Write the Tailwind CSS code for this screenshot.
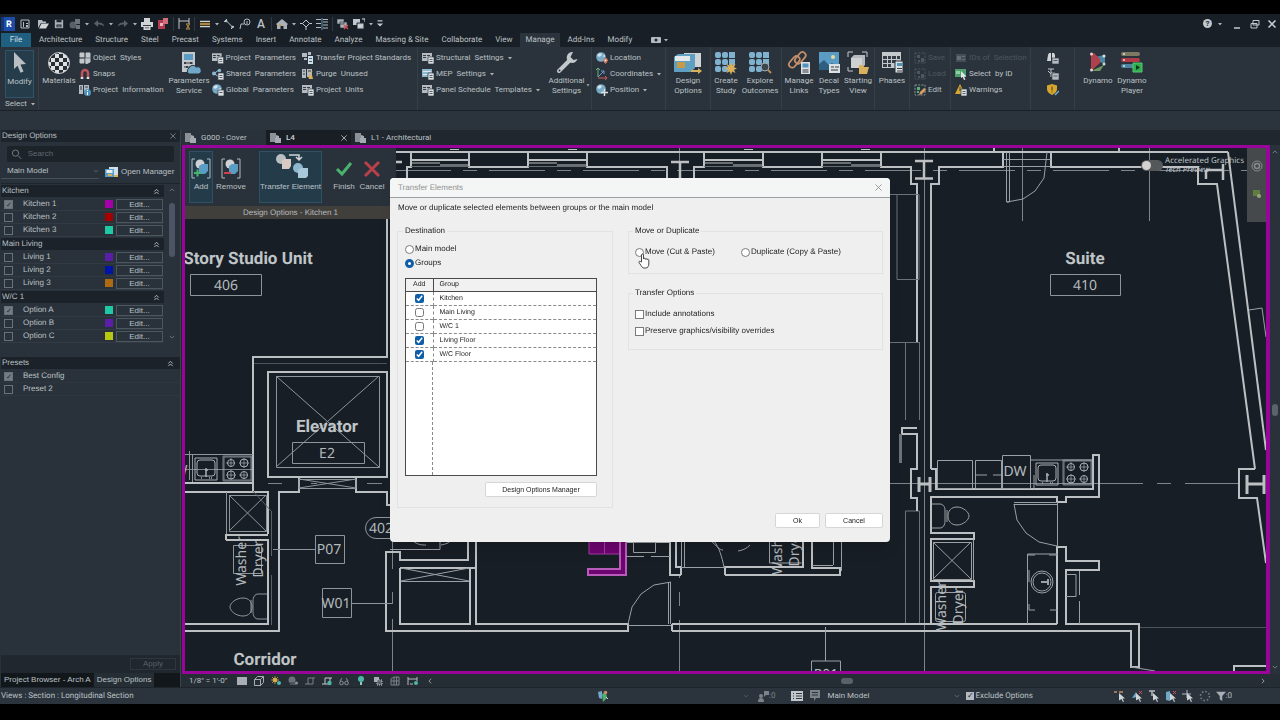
<!DOCTYPE html>
<html lang="en">

<head>
  <meta charset="UTF-8">
  <meta name="viewport" content="width=device-width, initial-scale=1.0">
  <title>Design Options - Transfer Elements</title>
  <script src="https://cdn.jsdelivr.net/npm/@tailwindcss/browser@4"></script>
</head>

<body class="h-screen flex flex-col bg-black pt-3.5 pb-4 overflow-hidden font-['Roboto',sans-serif] text-[8px] leading-[10px] text-[#bcc1c5] [text-rendering:geometricPrecision]">

  <!-- Icon sprite -->
  <svg class="hidden">
    <symbol id="i-caret" viewBox="0 0 8 8"><path d="M2 3h4L4 5.500z" fill="#aeb4b9"/></symbol>
    <symbol id="i-chev" viewBox="0 0 8 8"><path d="M1 2.500l3 3 3-3" fill="none" stroke="currentColor"/></symbol>
    <symbol id="i-x" viewBox="0 0 8 8"><path d="M.5.5l7 7M7.500.5l-7 7" fill="none" stroke="currentColor"/></symbol>
    <symbol id="i-dbl" viewBox="0 0 8 8"><path d="M1.500 4L4 1.500 6.500 4M1.500 7L4 4.500 6.500 7" fill="none" stroke="#c3c8cc"/></symbol>
    <symbol id="i-home" viewBox="0 0 12 12"><path d="M2 2h8v8H2z" fill="none" stroke="#b4babf"/><path d="M4 4h1v5H4zM7 5h2v1H7zM7 7h2v2H7z" fill="#b4babf"/></symbol>
    <symbol id="i-folder" viewBox="0 0 12 12"><path d="M1 10V2h4l1 1.500h3V5H4z" fill="#b4babf"/><path d="M4.500 5.500H12L9 10.500H2z" fill="#d0d4d7"/></symbol>
    <symbol id="i-save" viewBox="0 0 12 12"><path d="M1 1h10v10H1z" fill="#aab0b5"/><path d="M3 1h6v3H3zM3 6.500h6V10H3z" fill="#20282f"/><path d="M4 8h4v1H4z" fill="#aab0b5"/></symbol>
    <symbol id="i-sync" viewBox="0 0 12 12"><circle cx="4" cy="7" r="3.500" fill="#596066"/><path d="M6 1h5v5H6zM7 7h4v4H7z" fill="#6c7379"/></symbol>
    <symbol id="i-undo" viewBox="0 0 12 12"><path d="M1 5.500L5 2v2.500c3.500 0 6 1 6 4-1.500-1.500-3-2-6-2V9z" fill="#596066"/></symbol>
    <symbol id="i-redo" viewBox="0 0 12 12"><path d="M11 5.500L7 2v2.500c-3.500 0-6 1-6 4 1.500-1.500 3-2 6-2V9z" fill="#596066"/></symbol>
    <symbol id="i-print" viewBox="0 0 12 12"><path d="M3 0h6v4H3zM0 4h12v5H0zM2.500 7h7v5h-7z" fill="#d0d4d7"/><path d="M2 7h8v1H2zM4 9.500h4v.8H4z" fill="#353d44"/></symbol>
    <symbol id="i-pdf" viewBox="0 0 12 12"><path d="M1 2h7v9H1z" fill="#b33c50"/><path d="M6 0h5v6H6z" fill="#cf6f7c"/><path d="M3 5h3v3H3z" fill="#e5b6bc"/></symbol>
    <symbol id="i-dim" viewBox="0 0 12 12"><path d="M1 0v11M11 0v6M1 3h10" stroke="#c3c8cc" fill="none"/><path d="M8 6h4M8 11h4M8.500 6.500l3 4M11.500 6.500l-3 4" stroke="#c09a48" fill="none"/></symbol>
    <symbol id="i-ruler" viewBox="0 0 12 12"><path d="M0 2h12v1.500H0zM0 8.500h12V10H0z" fill="#d0d4d7"/><path d="M0 4.500h12v3H0z" fill="#b0873a"/></symbol>
    <symbol id="i-align" viewBox="0 0 12 12"><path d="M1 4l3-3M3 2.500l6 6M8 11l3-3" stroke="#b4c6d2" fill="none"/><circle cx="3" cy="3" r="1.300" fill="#b4c6d2"/><circle cx="9.500" cy="9" r="1.300" fill="#b4c6d2"/></symbol>
    <symbol id="i-tag" viewBox="0 0 12 12"><circle cx="8" cy="4" r="3" stroke="#b4babf" fill="none"/><path d="M1 11l1-5h3M8 3v3" stroke="#b4babf" fill="none"/></symbol>
    <symbol id="i-3d" viewBox="0 0 12 12"><path d="M0 6l6-5 6 5-1 1v4H7.500V8h-3v3H1V7z" fill="#aab0b5"/><path d="M3 6h2v2H3z" fill="#c8a050"/></symbol>
    <symbol id="i-section" viewBox="0 0 12 12"><path d="M6 2l3.500 3.500L6 9 2.500 5.500z" fill="none" stroke="#c3c8cc"/><path d="M0 5.500h2.500M9.500 5.500H12M6 9v3" stroke="#c3c8cc"/></symbol>
    <symbol id="i-thin" viewBox="0 0 12 12"><path d="M0 1.500h5M0 5.500h5M0 9.500h5M7 1.500h5M7 4h5M7 7h5M7 10h5" stroke="#b4babf"/><path d="M6 0v12" stroke="#5f93b0"/></symbol>
    <symbol id="i-close-w" viewBox="0 0 12 12"><path d="M0 1h7v5H0zM3 4h7v6H3z" fill="#aab0b5" stroke="#20282f" stroke-width=".6"/><path d="M7 7l4 4M11 7l-4 4" stroke="#d04c58" stroke-width="1.300"/></symbol>
    <symbol id="i-switch" viewBox="0 0 12 12"><path d="M0 1h7v6H0z" fill="#c3c8cc"/><path d="M4 5h7v6H4z" fill="#c3c8cc" stroke="#20282f"/><path d="M9 1h3v3M5 8h4" stroke="#e0e3e5" fill="none"/></symbol>
    <symbol id="i-cam" viewBox="0 0 10 6"><rect width="10" height="6" rx="1" fill="#b4babf"/><circle cx="5" cy="3" r="1.500" fill="#20282f"/></symbol>
    <symbol id="i-form" viewBox="0 0 12 12"><path d="M0 1h10v8H0z" fill="#b4babf"/><path d="M1 3h3v1H1zM1 5h3v1H1zM5 3h3v1H5z" fill="#353d44"/><path d="M6 5h6v7H6z" fill="#dde0e2" stroke="#353d44" stroke-width=".7"/><path d="M7.500 7h3v1h-3zM7.500 9h3v1h-3z" fill="#4b6170"/></symbol>
    <symbol id="i-formb" viewBox="0 0 12 12"><path d="M0 1h10v8H0z" fill="#8db7cf"/><path d="M1 3h8v1H1zM1 6h4v1H1z" fill="#e3e6e8"/><path d="M6 5h6v7H6z" fill="#dde0e2" stroke="#353d44" stroke-width=".7"/><path d="M7.500 7h3v1h-3zM7.500 9h3v1h-3z" fill="#4b6170"/></symbol>
    <symbol id="i-styles" viewBox="0 0 12 12"><path d="M1 1h4v4H1zM7 1h4v4H7zM1 7h4v4H1zM6 6l5-1v5l-4 2z" fill="#c3c8cc" stroke="#c3c8cc"/><path d="M6 0v12M0 6h12" stroke="#56606a" stroke-width=".7"/></symbol>
    <symbol id="i-magnet" viewBox="0 0 12 12"><path d="M3 9V5a3 3 0 016 0v4" fill="none" stroke="#c05562" stroke-width="2.500"/><path d="M1.700 9h2.600v2H1.700zM7.700 9h2.600v2H7.700z" fill="#dde0e2"/></symbol>
    <symbol id="i-info" viewBox="0 0 12 12"><path d="M0 1h4v9H0zM5 1h5v8H5z" fill="#b4babf"/><path d="M1 3h2M6 3h3M1 5h2" stroke="#353d44"/><circle cx="8.500" cy="8.500" r="3.500" fill="#4f93bf"/><path d="M8.500 6v1M8.500 8v3" stroke="#fff"/></symbol>
    <symbol id="i-share" viewBox="0 0 12 12"><path d="M2 5.500L7 2M2 5.500L7 9" stroke="#9cc3da"/><circle cx="2" cy="5.500" r="2" fill="#8db7cf"/><circle cx="7.500" cy="2.500" r="1.800" fill="#8db7cf"/><path d="M6 5h6v7H6z" fill="#dde0e2" stroke="#353d44" stroke-width=".7"/><path d="M7.500 7h3v1h-3zM7.500 9h3v1h-3z" fill="#4b6170"/></symbol>
    <symbol id="i-globe" viewBox="0 0 12 12"><circle cx="5" cy="5" r="4.800" fill="#76aac6"/><path d="M1 3l3-2 2 1-1 2-2 1zM6 5l3-1v2L7 9z" fill="#d4e2ea"/><path d="M6 6h6v6H6z" fill="#dde0e2" stroke="#353d44" stroke-width=".7"/><path d="M7.500 8h3v1h-3z" fill="#4b6170"/></symbol>
    <symbol id="i-pin" viewBox="0 0 12 12"><circle cx="5" cy="5" r="4.800" fill="#76aac6"/><path d="M1 3l3-2 2 1-1 2-2 1zM6 4l3-1v2z" fill="#d4e2ea"/><path d="M9.500 6a2.300 2.300 0 012.300 2.300C11.800 10 9.500 12 9.500 12S7.200 10 7.200 8.300A2.300 2.300 0 019.500 6z" fill="#cf7a5c"/><circle cx="9.500" cy="8.300" r=".9" fill="#fff"/></symbol>
    <symbol id="i-coord" viewBox="0 0 12 12"><path d="M2 0v9M0 2l2-2 2 2" stroke="#65b484" fill="none"/><path d="M2 9l6-6M5 3h3v3" stroke="#6c9bd0" fill="none"/><path d="M2 10h9M9 8l2 2-2 2" stroke="#cf5b5b" fill="none"/></symbol>
    <symbol id="i-pos" viewBox="0 0 12 12"><circle cx="5" cy="5" r="4.800" fill="#76aac6"/><path d="M1 3l3-2 2 1-1 2-2 1z" fill="#d4e2ea"/><path d="M8.500 5v7M5 8.500h7" stroke="#dde0e2" stroke-width="1.500"/></symbol>
    <symbol id="i-transfer" viewBox="0 0 12 12"><path d="M0 1h5v4H0zM6 0h3v3H6zM2 6h3v2H2z" fill="#b4babf"/><path d="M6 4h5v8H6z" fill="#cfe0ea"/><path d="M7 6h3v1H7zM7 9h3v1H7z" fill="#4b6170"/></symbol>
    <symbol id="i-purge" viewBox="0 0 12 12"><path d="M0 1h4v9H0zM5 1h5v8H5z" fill="#b4babf"/><path d="M1 3h2M6 3h3M1 6h2" stroke="#353d44"/><path d="M10 3L8 7" stroke="#d9b15d"/><path d="M6 8l4-1 1 4H7z" fill="#d9b15d"/></symbol>
    <symbol id="i-sel" viewBox="0 0 12 12"><path d="M1 1h10v10H1z" fill="none" stroke="currentColor" stroke-dasharray="2 1.200"/><path d="M3 3h3v3H3zM7 6h3v4H7zM4 8h2v2H4z" fill="currentColor"/></symbol>
    <symbol id="i-seledit" viewBox="0 0 12 12"><path d="M1 1h10v10H1z" fill="none" stroke="#8b949b" stroke-dasharray="2 1.200"/><path d="M3 3h3v3H3zM3 7h2v2H3z" fill="#54b377"/><path d="M5 11l1-3 4-4 2 2-4 4z" fill="#d89a63"/></symbol>
    <symbol id="i-ids" viewBox="0 0 12 12"><path d="M1 2h10v8H1z" fill="#454e56"/><path d="M2 4h4v4H2zM7 4h3v1H7zM7 7h3v1H7z" fill="#646d75"/></symbol>
    <symbol id="i-byid" viewBox="0 0 12 12"><path d="M0 1h11v8H0z" fill="#4da06c"/><path d="M1 3h4v3H1z" fill="#8fd0a6"/><path d="M6 3l5.500 5.500H9l1.500 3-1.500.5-1.300-3L6 10z" fill="#e3e6e8"/></symbol>
    <symbol id="i-warn" viewBox="0 0 12 12"><path d="M5 0l5 10H0z" fill="#d9a62c"/><path d="M5 3v4" stroke="#353d44"/><path d="M6 5h6v7H6z" fill="#dde0e2" stroke="#353d44" stroke-width=".7"/><path d="M7.500 7h3v1h-3zM7.500 9h3v1h-3z" fill="#4b6170"/></symbol>
    <symbol id="i-bino" viewBox="0 0 12 12"><path d="M1 3l1-2h2v8H0zM5 1h2l1 2v3H5z" fill="#d0d4d7"/><path d="M5 6h7v6H5z" fill="#b4babf" stroke="#2b333b" stroke-width=".6"/><path d="M6.500 8h4v1h-4z" fill="#4b6170"/></symbol>
    <symbol id="i-tree" viewBox="0 0 12 12"><path d="M1 1h6M4 1v8M4 5h4M1 3l3 3" stroke="#c3c8cc" fill="none"/><path d="M5 5h7v7H5z" fill="#b4babf" stroke="#2b333b" stroke-width=".6"/><path d="M6.500 7.500h4v1h-4z" fill="#4b6170"/></symbol>
    <symbol id="i-shield" viewBox="0 0 12 12"><path d="M5 0l5 1.500V5c0 3-2 4.500-5 6-3-1.500-5-3-5-6V1.500z" fill="#d9a62c"/><path d="M5 2.500v4M5 7.500v1" stroke="#353d44"/><path d="M8 11l4-4" stroke="#6fb0d4" stroke-width="1.500"/></symbol>
    <symbol id="i-manager" viewBox="0 0 14 12"><path d="M4 1h9v8H4z" fill="#cfe0ea"/><path d="M0 3h9v8H0z" fill="#5b9cc4"/><path d="M1.500 4h6v3h-6z" fill="#e9eef2"/><path d="M3 8h4v2H3zM9 9h4v2H9z" fill="#d9b15d"/></symbol>
    <symbol id="i-doc" viewBox="0 0 12 12"><path d="M0 1h6v9H0z" fill="#8b9197"/><path d="M6 3l3 1v2h2v5H5V6h1z" fill="#a5abb0"/></symbol>
    <symbol id="i-bulb" viewBox="0 0 10 12"><circle cx="5" cy="4" r="3" fill="#4fb5a9"/><path d="M4 7h2v3H4z" fill="#8fc9c2"/></symbol>
    <symbol id="i-cursor" viewBox="0 0 12 12"><path d="M5 3l6 5.500H8.500L10 11.500l-1 .5-1.500-3L5 10.500z" fill="#d0d4d7"/></symbol>
    <symbol id="i-funnel" viewBox="0 0 12 12"><path d="M0 1h12L7.500 6v6L4.500 10V6z" fill="#a8aeb3"/></symbol>
  </svg>

  <!-- Title bar and quick access -->
  <header class="bg-[#181f26]">
    <div class="flex items-center h-[19px] pl-px">
      <svg class="w-3.5 h-3.5 mr-0.5" viewBox="0 0 14 14"><path d="M0 0h14v14H0z" fill="#1d4ca6"/><path d="M0 0h3v14H0z" fill="#12357c"/><text x="5" y="10" font-size="9" font-weight="700" fill="#fff">R</text></svg>
      <button class="w-4 flex justify-center" aria-label="Home"><svg class="w-3 h-3"><use href="#i-home"/></svg></button>
      <button class="w-4 flex justify-center ml-0.5" aria-label="Open"><svg class="w-3 h-3"><use href="#i-folder"/></svg></button>
      <button class="w-4 flex justify-center" aria-label="Save"><svg class="w-2.5 h-2.5"><use href="#i-save"/></svg></button>
      <button class="w-4 flex justify-center" aria-label="Synchronize"><svg class="w-3 h-3"><use href="#i-sync"/></svg></button>
      <svg class="w-2 h-2"><use href="#i-caret"/></svg>
      <button class="w-4 flex justify-center" aria-label="Undo"><svg class="w-3 h-3"><use href="#i-undo"/></svg></button>
      <svg class="w-2 h-2"><use href="#i-caret"/></svg>
      <button class="w-4 flex justify-center" aria-label="Redo"><svg class="w-3 h-3"><use href="#i-redo"/></svg></button>
      <svg class="w-2 h-2"><use href="#i-caret"/></svg>
      <button class="w-4 flex justify-center" aria-label="Print"><svg class="w-3 h-3"><use href="#i-print"/></svg></button>
      <button class="w-4 flex justify-center" aria-label="Export PDF"><svg class="w-3 h-3"><use href="#i-pdf"/></svg></button>
      <span class="w-px h-3.5 mx-0.5 bg-[#303941]"></span>
      <button class="w-4 flex justify-center" aria-label="Measure"><svg class="w-3 h-3"><use href="#i-dim"/></svg></button>
      <span class="w-px h-3.5 mx-0.5 bg-[#303941]"></span>
      <button class="w-4 flex justify-center" aria-label="Dimension"><svg class="w-2.5 h-2.5"><use href="#i-ruler"/></svg></button>
      <svg class="w-2 h-2"><use href="#i-caret"/></svg>
      <button class="w-4 flex justify-center" aria-label="Align"><svg class="w-3 h-3"><use href="#i-align"/></svg></button>
      <button class="w-4 flex justify-center" aria-label="Tag"><svg class="w-3 h-3"><use href="#i-tag"/></svg></button>
      <button class="w-4 text-center text-[12px] leading-3 font-medium">A</button>
      <span class="w-px h-3.5 mx-0.5 bg-[#303941]"></span>
      <button class="w-4 flex justify-center" aria-label="3D view"><svg class="w-3 h-3"><use href="#i-3d"/></svg></button>
      <svg class="w-2 h-2"><use href="#i-caret"/></svg>
      <button class="w-4 flex justify-center" aria-label="Section"><svg class="w-3 h-3"><use href="#i-section"/></svg></button>
      <button class="w-4 flex justify-center" aria-label="Thin lines"><svg class="w-3 h-3"><use href="#i-thin"/></svg></button>
      <span class="w-px h-3.5 mx-0.5 bg-[#303941]"></span>
      <button class="w-4 flex justify-center" aria-label="Close inactive views"><svg class="w-3 h-3"><use href="#i-close-w"/></svg></button>
      <button class="w-4 flex justify-center" aria-label="Switch windows"><svg class="w-3 h-3"><use href="#i-switch"/></svg></button>
      <svg class="w-2 h-2"><use href="#i-caret"/></svg>
      <svg class="w-2.5 h-2.5" viewBox="0 0 8 8"><path d="M2 1.500h4" stroke="#c3c8cc"/><path d="M1.500 3.500h5L4 6z" fill="#c3c8cc"/></svg>
      <div class="ml-auto flex items-center pr-1 gap-2">
        <span class="flex items-center gap-1"><button class="size-[9px] rounded-full bg-[#c3c8cc] text-[#20282f] text-[8px] leading-[9px] font-bold">?</button><svg class="w-2 h-2"><use href="#i-caret"/></svg></span>
        <button aria-label="Minimize"><svg class="w-2.5 h-2.5" viewBox="0 0 10 10"><path d="M2 9h6" stroke="#c3c8cc" stroke-width="1.500"/></svg></button>
        <button aria-label="Restore"><svg class="w-2.5 h-2.5" viewBox="0 0 10 10"><path d="M3 1.500h6V6H3zM1 4.500h6V9H1z" fill="#181f26" stroke="#c3c8cc"/></svg></button>
        <button class="text-[#d0d4d7]" aria-label="Close"><svg class="w-2 h-2"><use href="#i-x" stroke-width="1.500"/></svg></button>
      </div>
    </div>

    <!-- Ribbon tabs -->
    <nav class="flex items-center h-3.5 pl-px gap-px">
      <a href="#" class="h-full w-[30px] mr-px text-center leading-[14px] bg-[#1f5f80] text-[#c9dbe4]">File</a>
      <a href="#" class="px-1.5">Architecture</a>
      <a href="#" class="px-1.5">Structure</a>
      <a href="#" class="px-1.5">Steel</a>
      <a href="#" class="px-1.5">Precast</a>
      <a href="#" class="px-1.5">Systems</a>
      <a href="#" class="px-1.5">Insert</a>
      <a href="#" class="px-1.5">Annotate</a>
      <a href="#" class="px-1.5">Analyze</a>
      <a href="#" class="px-1.5">Massing &amp; Site</a>
      <a href="#" class="px-1.5">Collaborate</a>
      <a href="#" class="px-1.5">View</a>
      <a href="#" class="h-full px-1.5 leading-[14px] bg-[#2b343c]">Manage</a>
      <a href="#" class="px-1.5">Add-Ins</a>
      <a href="#" class="px-1.5">Modify</a>
      <svg class="w-2.5 h-1.5 ml-3"><use href="#i-cam"/></svg>
      <svg class="w-2 h-2"><use href="#i-caret"/></svg>
    </nav>
  </header>

  <!-- Ribbon -->
  <section class="flex h-16 shrink-0 pl-px bg-[#2a333b] border-b border-[#1a2127] text-center">
    <div class="w-[38px] border-r border-[#353f48] px-1 pt-[3px]">
      <button class="w-full h-12 flex flex-col items-center bg-[#253c4b] border border-[#31536a]">
        <svg class="w-5 h-[26px]" viewBox="0 0 20 26"><path d="M4 1l12 12-5.500.5 3 7-3 1.300-3-7L4 18z" fill="#b9bec2"/></svg>
        <span>Modify</span>
      </button>
      <button class="flex items-center w-full mt-px">Select<svg class="w-2 h-2 ml-0.5 shrink-0"><use href="#i-caret"/></svg></button>
    </div>
    <div class="w-[379px] border-r border-[#353f48] flex pt-[3px]">
      <button class="w-10 flex flex-col items-center">
        <svg class="w-6 h-[26px]" viewBox="0 0 24 26"><defs><pattern id="chk" width="8" height="8" patternUnits="userSpaceOnUse"><path d="M0 0h8v8H0z" fill="#dde0e2"/><path d="M0 0h4v4H0zM4 4h4v4H4z" fill="#272e34"/></pattern></defs><circle cx="12" cy="13" r="10.500" fill="url(#chk)" stroke="#c3c8cc"/></svg>
        <span>Materials</span>
      </button>
      <div class="w-[91px] flex flex-col">
        <button class="flex items-center h-4 gap-0.5"><svg class="w-3 h-3"><use href="#i-styles"/></svg>Object&nbsp; Styles</button>
        <button class="flex items-center h-4 gap-0.5"><svg class="w-3 h-3"><use href="#i-magnet"/></svg>Snaps</button>
        <button class="flex items-center h-4 gap-0.5"><svg class="w-3 h-3"><use href="#i-info"/></svg>Project&nbsp; Information</button>
      </div>
      <button class="w-[38px] flex flex-col items-center">
        <svg class="w-6 h-[26px]" viewBox="0 0 24 26"><path d="M5 2h13v20H5z" fill="#c3c8cc"/><path d="M7 4h9v6H7z" fill="#5b9cc4"/><path d="M7 13h9M7 17h6" stroke="#353d44"/><path d="M8 12v2M14 12v2M10 16v2" stroke="#353d44" stroke-width="2"/><path d="M12 24a3.500 3.500 0 010-6 4 4 0 017-1 3.500 3.500 0 013 7z" fill="#6fa8c8" stroke="#2a333b"/></svg>
        <span>Parameters Service</span>
      </button>
      <div class="w-[88px] flex flex-col pl-1">
        <button class="flex items-center h-4 gap-0.5 whitespace-nowrap"><svg class="w-3 h-3"><use href="#i-form"/></svg>Project&nbsp; Parameters</button>
        <button class="flex items-center h-4 gap-0.5 whitespace-nowrap"><svg class="w-3 h-3"><use href="#i-share"/></svg>Shared&nbsp; Parameters</button>
        <button class="flex items-center h-4 gap-0.5 whitespace-nowrap"><svg class="w-3 h-3"><use href="#i-globe"/></svg>Global&nbsp; Parameters</button>
      </div>
      <div class="flex flex-col pl-1.5">
        <button class="flex items-center h-4 gap-0.5 whitespace-nowrap"><svg class="w-3 h-3"><use href="#i-transfer"/></svg>Transfer Project Standards</button>
        <button class="flex items-center h-4 gap-0.5 whitespace-nowrap"><svg class="w-3 h-3"><use href="#i-purge"/></svg>Purge&nbsp; Unused</button>
        <button class="flex items-center h-4 gap-0.5 whitespace-nowrap"><svg class="w-3 h-3"><use href="#i-form"/></svg>Project&nbsp; Units</button>
      </div>
    </div>
    <div class="w-[174px] border-r border-[#353f48] flex pt-[3px]">
      <div class="w-[130px] flex flex-col pl-1">
        <button class="flex items-center h-4 gap-0.5 whitespace-nowrap"><svg class="w-3 h-3"><use href="#i-form"/></svg>Structural&nbsp; Settings<svg class="w-2 h-2"><use href="#i-caret"/></svg></button>
        <button class="flex items-center h-4 gap-0.5 whitespace-nowrap"><svg class="w-3 h-3"><use href="#i-formb"/></svg>MEP&nbsp; Settings<svg class="w-2 h-2"><use href="#i-caret"/></svg></button>
        <button class="flex items-center h-4 gap-0.5 whitespace-nowrap"><svg class="w-3 h-3"><use href="#i-form"/></svg>Panel Schedule&nbsp; Templates<svg class="w-2 h-2"><use href="#i-caret"/></svg></button>
      </div>
      <button class="w-[37px] flex flex-col items-center">
        <svg class="w-6 h-[26px]" viewBox="0 0 24 26"><path d="M4 21L14 11" stroke="#c3c8cc" stroke-width="4" stroke-linecap="round"/><path d="M18 2a5.500 5.500 0 104.500 7l-4 1-3-3z" fill="#c3c8cc"/><circle cx="4.500" cy="20.500" r="1" fill="#2a333b"/></svg>
        <span>Additional Settings</span>
      </button>
      <svg class="w-1.5 h-1.5 mt-8 shrink-0"><use href="#i-caret"/></svg>
    </div>
    <div class="w-[74px] border-r border-[#353f48] flex flex-col pt-[3px] pl-1">
      <button class="flex items-center h-4 gap-0.5"><svg class="w-3 h-3"><use href="#i-pin"/></svg>Location</button>
      <button class="flex items-center h-4 gap-0.5"><svg class="w-3 h-3"><use href="#i-coord"/></svg>Coordinates<svg class="w-2 h-2"><use href="#i-caret"/></svg></button>
      <button class="flex items-center h-4 gap-0.5"><svg class="w-3 h-3"><use href="#i-pos"/></svg>Position<svg class="w-2 h-2"><use href="#i-caret"/></svg></button>
    </div>
    <div class="w-[45px] border-r border-[#353f48] flex justify-center pt-[3px]">
      <button class="flex flex-col items-center w-9">
        <svg class="w-[30px] h-[26px]" viewBox="0 0 30 26"><path d="M11 3h17v14H11z" fill="#d0d4d7"/><path d="M1 7l4-3h17v14l-4 4H1z" fill="#5f9fc2"/><path d="M2 6h15v5H2z" fill="#e3e8eb"/><path d="M4 12h8v6H4z" fill="#c79b45"/><path d="M18 20h7v-2l4 3-4 3v-2h-7z" fill="#d9b15d"/></svg>
        <span>Design Options</span>
      </button>
    </div>
    <div class="w-[71px] border-r border-[#353f48] flex pt-[3px]">
      <button class="flex flex-col items-center w-[30px]">
        <svg class="w-6 h-[26px]" viewBox="0 0 24 26"><g fill="#7fb2cf"><rect x="1" y="2" width="6" height="6" rx="2"/><rect x="8" y="2" width="6" height="6" rx="2"/><rect x="15" y="2" width="6" height="6"/><rect x="1" y="9" width="6" height="6" rx="2"/><rect x="8" y="9" width="6" height="6" rx="2"/><rect x="15" y="9" width="6" height="6"/><rect x="1" y="16" width="6" height="6" rx="2"/><rect x="8" y="16" width="6" height="6" rx="2"/></g><path d="M17 12l1.200 3.500L21.500 14l-1.500 3.300L23 18.500l-3 1.200 1.500 3.300-3.300-1.500L17 25l-1.200-3.500-3.300 1.500 1.500-3.300-3-1.200 3-1.200-1.500-3.300 3.300 1.500z" fill="#d9b15d"/></svg>
        <span>Create Study</span>
      </button>
      <button class="flex flex-col items-center w-[38px]">
        <svg class="w-6 h-[26px]" viewBox="0 0 24 26"><g fill="#7fb2cf"><rect x="1" y="2" width="6" height="6" rx="2"/><rect x="8" y="2" width="6" height="6" rx="2"/><rect x="15" y="2" width="6" height="6"/><rect x="1" y="9" width="6" height="6" rx="2"/><rect x="8" y="9" width="6" height="6" rx="2"/><rect x="15" y="9" width="6" height="6"/><rect x="1" y="16" width="6" height="6" rx="2"/><rect x="8" y="16" width="6" height="6" rx="2"/></g><circle cx="17" cy="17" r="4" fill="#3c464e" stroke="#a8aeb3"/><path d="M20 20l3 3" stroke="#b48a5a" stroke-width="2"/></svg>
        <span>Explore Outcomes</span>
      </button>
    </div>
    <div class="w-[93px] border-r border-[#353f48] flex pt-[3px]">
      <button class="flex flex-col items-center w-[34px]">
        <svg class="w-6 h-[26px]" viewBox="0 0 24 26"><g fill="none" stroke="#c58f6a" stroke-width="1.800"><rect x="1" y="8.500" width="13" height="6.500" rx="3.200" transform="rotate(-50 7.500 12)"/><rect x="7" y="4.500" width="13" height="6.500" rx="3.200" transform="rotate(-50 13.500 8)"/></g><path d="M14 12h9v12h-9z" fill="#dde0e2"/><path d="M15.500 13.500h6v4h-6z" fill="#4f93bf"/><path d="M15.500 20h6M15.500 22h6" stroke="#353d44"/></svg>
        <span>Manage Links</span>
      </button>
      <button class="flex flex-col items-center w-[26px]">
        <svg class="w-6 h-[26px]" viewBox="0 0 24 26"><path d="M2 2h20v18H2z" fill="#5b9cc4"/><path d="M2 20v-6l5-4 5 5 3-2 7 5v2z" fill="#2f5f80"/><circle cx="16" cy="7" r="2" fill="#e8d9a0"/><path d="M12 14h11v9H12z" fill="#dde0e2"/><path d="M14 17h3M18 17h4M14 20h7" stroke="#353d44"/></svg>
        <span>Decal Types</span>
      </button>
      <button class="flex flex-col items-center w-[32px]">
        <svg class="w-6 h-[26px]" viewBox="0 0 24 26"><path d="M2 7V2h5M16 2h5v5M2 17v4h5" fill="none" stroke="#c3c8cc"/><path d="M5 8l3-3h11v10l-3 3H5z" fill="#b4babf"/><path d="M5 8h11v10H5z" fill="#cdd1d4"/><path d="M13 24v-9h4l1 2h5l-2 7z" fill="#d9b15d"/></svg>
        <span>Starting View</span>
      </button>
    </div>
    <div class="w-[35px] border-r border-[#353f48] flex justify-center pt-[3px]">
      <button class="flex flex-col items-center">
        <svg class="w-6 h-[26px]" viewBox="0 0 24 26"><path d="M2 2h19v16H2z" fill="#c3c8cc"/><path d="M3 6h4v3H3zM8 6h3v3H8zM12 6h4v3h-4zM17 6h3v3h-3zM3 10h4v3H3zM8 10h3v3H8zM12 10h4v3h-4zM3 14h4v3H3zM8 14h3v3H8z" fill="#353d44"/><path d="M15 11h8v12h-8z" fill="#dde0e2" stroke="#2a333b"/><path d="M17 13h5v3h-5z" fill="#4f93bf"/><path d="M17 18.500h5M17 21h5" stroke="#353d44"/></svg>
        <span>Phases</span>
      </button>
    </div>
    <div class="w-[41px] border-r border-[#353f48] flex flex-col pt-[3px] pl-1 text-[#4d565e]">
      <button disabled class="flex items-center h-4 gap-0.5"><svg class="w-3 h-3"><use href="#i-sel"/></svg>Save</button>
      <button disabled class="flex items-center h-4 gap-0.5"><svg class="w-3 h-3"><use href="#i-sel"/></svg>Load</button>
      <button class="flex items-center h-4 gap-0.5 text-[#bcc1c5]"><svg class="w-3 h-3"><use href="#i-seledit"/></svg>Edit</button>
    </div>
    <div class="w-20 border-r border-[#353f48] flex flex-col pt-[3px] pl-1">
      <button disabled class="flex items-center h-4 gap-0.5 text-[#4d565e]"><svg class="w-3 h-3"><use href="#i-ids"/></svg>IDs of&nbsp; Selection</button>
      <button class="flex items-center h-4 gap-0.5"><svg class="w-3 h-3"><use href="#i-byid"/></svg>Select&nbsp; by ID</button>
      <button class="flex items-center h-4 gap-0.5"><svg class="w-3 h-3"><use href="#i-warn"/></svg>Warnings</button>
    </div>
    <div class="w-11 border-r border-[#353f48] flex flex-col items-center pt-[3px]">
      <button class="h-4" aria-label="Find"><svg class="w-3 h-3"><use href="#i-bino"/></svg></button>
      <button class="h-4" aria-label="Macros"><svg class="w-3 h-3"><use href="#i-tree"/></svg></button>
      <button class="h-4" aria-label="Security"><svg class="w-3 h-3"><use href="#i-shield"/></svg></button>
    </div>
    <div class="flex pt-[3px] pl-1.5">
      <button class="flex flex-col items-center w-[34px]">
        <svg class="w-6 h-[26px]" viewBox="0 0 24 26"><path d="M8 7l11-2v9l-8-3z" fill="#4a86a0"/><path d="M5 21l13-6-4 6z" fill="#6f9564"/><path d="M5 4l3-1 6 6v4L5 21z" fill="#b0404c"/><circle cx="5.500" cy="4" r="1.500" fill="#e8d0d0"/><circle cx="18" cy="6" r="1.500" fill="#d0e4ee"/><circle cx="5.500" cy="20" r="1.500" fill="#e8d0d0"/><circle cx="18" cy="14" r="1.500" fill="#c8dcc0"/></svg>
        <span>Dynamo</span>
      </button>
      <button class="flex flex-col items-center w-[34px]">
        <svg class="w-6 h-[26px]" viewBox="0 0 24 26"><rect x="1" y="2" width="19" height="4" rx="2" fill="#7c7a62"/><rect x="1" y="8" width="19" height="4" rx="2" fill="#b03a48"/><rect x="1" y="14" width="19" height="4" rx="2" fill="#4a86a0"/><circle cx="4" cy="4" r="1" fill="#ddd"/><circle cx="4" cy="10" r="1" fill="#ddd"/><circle cx="4" cy="16" r="1" fill="#ddd"/><path d="M13 13h9v9h-9z" fill="#2fae4e" stroke="#57c873"/><path d="M16 15l4 2.500-4 2.500z" fill="#10351a"/></svg>
        <span>Dynamo Player</span>
      </button>
    </div>
  </section>
  <div class="h-[19px] shrink-0 bg-[#2b343c]"></div>

  <main class="flex flex-1 min-h-0 bg-[#20272e]">

    <!-- Design options panel -->
    <aside class="w-[181px] shrink-0 flex flex-col pl-px bg-[#29323a] border-r border-[#3a434b] font-['Liberation_Sans',sans-serif]">
      <div class="flex items-center justify-between h-3 pl-px pr-1 bg-[#1d242b]">
        <h2>Design Options</h2>
        <button class="text-[#8b949b]" aria-label="Close panel"><svg class="w-1.5 h-1.5"><use href="#i-x"/></svg></button>
      </div>
      <label class="flex items-center h-4 mx-1.5 mt-1 mb-[3px] pl-1 gap-1.5 bg-[#1c2329] rounded-xs">
        <svg class="w-3 h-3" viewBox="0 0 12 12"><circle cx="5" cy="5" r="3.500" fill="none" stroke="#7b848b"/><path d="M8 8l3.500 3.500" stroke="#7b848b"/></svg>
        <input type="search" placeholder="Search" class="w-full bg-transparent outline-none placeholder:text-[#606a72]">
      </label>
      <div class="flex items-center h-3.5">
        <label class="relative flex items-center w-[98px] border-b border-[#46505a] pb-0.5">
          <select class="appearance-none w-full pl-1.5 outline-none" aria-label="Model"><option>Main Model</option></select>
          <svg class="absolute right-0 w-1.5 h-1.5 text-[#67717a]"><use href="#i-chev"/></svg>
        </label>
        <button class="flex items-center ml-1.5 gap-0.5 whitespace-nowrap"><svg class="w-3.5 h-3"><use href="#i-manager"/></svg>Open Manager</button>
      </div>

      <div class="flex mt-1 border-t border-[#1d242b]">
        <div id="groups" class="w-[163px]"></div>
        <div class="flex-1 flex flex-col items-center py-[3px] text-[#7b848b]">
          <svg class="w-1.5 h-1.5 rotate-180"><use href="#i-chev"/></svg>
          <span class="w-1.5 h-[54px] mt-2.5 rounded-full bg-[#4b5563]"></span>
          <svg class="w-1.5 h-1.5 mt-auto"><use href="#i-chev"/></svg>
        </div>
      </div>
      <div id="presets" class="mt-3.5"></div>

      <div class="mt-auto h-[18px] pr-1 flex items-center justify-end bg-[#20272e]">
        <button disabled class="w-[46px] h-3 leading-[10px] border border-[#2e373f] text-[#59626a]">Apply</button>
      </div>
      <div class="flex h-3.5 items-center bg-[#12171c]">
        <button class="h-full px-[3px] whitespace-nowrap">Project Browser - Arch A</button>
        <button class="h-full px-[3px] whitespace-nowrap bg-[#252d35]">Design Options</button>
      </div>
    </aside>

    <!-- Drawing area -->
    <div class="flex-1 min-w-0 flex flex-col">
      <div class="flex h-[15px] bg-[#20272e] text-[8px]">
        <button class="w-[85px] flex items-center gap-1 pl-1 bg-[#29323a]"><svg class="w-3 h-3"><use href="#i-doc"/></svg>G000 - Cover</button>
        <button class="w-[85px] flex items-center gap-1 pl-1 bg-[#181e24] font-medium text-[#d0d4d7]"><svg class="w-3 h-3"><use href="#i-doc"/></svg>L4<svg class="w-1.5 h-1.5 ml-auto mr-1"><use href="#i-x"/></svg></button>
        <button class="flex items-center gap-1 pl-1"><svg class="w-3 h-3"><use href="#i-doc"/></svg>L1 - Architectural</button>
      </div>
      <div class="flex flex-1 min-h-0">
        <div class="relative flex-1 min-w-0 bg-[#181e25] border-[#99059b] border-t-[3px] border-b-[3px] border-l-[3px] border-r-4 ml-px">

          <!-- Floor plan -->
          <svg class="block w-full h-full" viewBox="185 148 1081 523" preserveAspectRatio="xMinYMin slice" fill="none">
            <defs>
              <g id="burners" stroke="#a8aeb3"><circle cx="8" cy="7" r="3.500"/><circle cx="21" cy="7" r="4"/><circle cx="8" cy="19" r="4"/><circle cx="21" cy="19" r="3.500"/><path d="M0 0h29v25H0zM1 1h27v23H1zM3 7h9M16 7h10M3 19h10M16 19h9M8 2v9M21 2v10M8 14v10M21 15v8" stroke-width=".7"/></g>
              <g id="sink" stroke="#a8aeb3"><path d="M0 0h22v22H0z"/><rect x="2" y="2" width="18" height="16" rx="3"/><path d="M11 10v9M10 12h3M6 20h1M14 20h1M16 20h1" stroke-width="1.500"/></g>
            </defs>
            <!-- grid lines -->
            <g stroke="#7d848a">
              <path d="M395 170.500h1011" stroke-dasharray="56 12 14 12"/>
              <path d="M1022.500 148v73M1149.500 148v73M679.500 148v14M924.500 148v523"/>
              <path d="M185 469.500h68M890 483.500h253M1157 483.500h14M1185 483.500h54"/>
              <path d="M268 483.500h14M367 483.500h15M311 483.500h6"/>
              <path d="M392.500 541v28M392.500 592v12M392.500 619v52M679.500 578v-4M679.500 592v14M679.500 620v51"/>
              <path d="M253 363.500h134M1139 627.500h127" stroke="#4c545b"/>
            </g>
            <!-- top wall -->
            <g stroke="#bcc0c3" stroke-width="2">
              <path d="M395 152h16v15h-4v11M411 160h58M469 152v15h59v-15M528 160h59M587 152v15h80v11M694 178v-11h10v-15M704 160h59M763 152v15h59v-15M822 160h59M881 152v15h30v17h6v158M931 469V184h8v-17h64v-15M411 152h817M1051 152v15h147v17h19l38 285"/>
              <path d="M411 163h29M440 165h29M528 163h29M557 165h30M704 163h29M733 165h30M822 163h29M851 165h30" stroke-width="1"/>
              <path d="M411 166.500h58M528 166.500h59M704 166.500h59M822 166.500h59" stroke="#666d73" stroke-width="1"/>
              <path d="M1228 152l38 298"/>
              <path d="M994 148v4M1119 148v4"/>
              <path d="M450 149.500h9M568 149.500h9M744 149.500h9M861 149.500h9" stroke-width="1"/>
              <path d="M395 162h7M671 162h18M680 162v16M915 161h18M915 178.500h18M924 161v17M1206 170v9M1223 164v16M1206 170h16" stroke-width="2.500"/>
            </g>
            <g stroke="#9aa0a5">
              <path d="M1006.500 152v50h3v-50M1003 159.500h48M1003 166.500h48M1007 202l16-3 12-8 9-13 3-26"/>
              <path d="M890 194.500h29v85h-22v-85M890 342.500h29M905.500 342v78M919.500 342v78M905.500 511v113h14V511z" stroke="#6b7278"/>
              <path d="M1249 310l13-2 4 29"/>
            </g>
            <!-- elevator -->
            <g stroke="#bcc0c3" stroke-width="2">
              <path d="M387 219v138H253v134M268 477V372h119v105zM185 483h68M185 492h83v42M226 540v-5h42M226 540h42v84h-83M185 631h94V492h20v-15M356 477v15h31v13h3M390 552h-4v79h242v-7H476V541M299 477v15"/>
            </g>
            <g stroke="#8e959a">
              <path d="M276.500 376.500h103v91h-103zM276 376l103 91M379 376L276 467M292.500 442.500h72v21h-72zM190.500 274.500h71v21h-71zM1050.500 274.500h70v21h-70z"/>
              <path d="M299 479.500h57v9h-57zM299 479l57 9M356 479l-57 9"/>
              <path d="M185 454.500h68M189.500 451v29M192.500 454v28M226.500 492v42M229.500 495.500h37v36h-37zM229 495l37 36M266 495l-37 36M233.500 545.500h28v28h-28z"/>
              <path d="M315.500 535.500h29v28h-29zM322.500 588.500h29v29h-29zM273 549.500h42M351 603.500h41M376 517.500h14M376 538.500h14M376 517.500a10.500 10.500 0 000 21"/>
              <path d="M271.500 511v45M253 491l18 20M271.500 575v50" stroke="#5a6167"/>
              <path d="M230 607c0-4 6-9 13-9 6 0 9 4 9 9s-3 9-9 9c-7 0-13-5-13-9z"/><path d="M267 594h-9c-3 0-5 3-5 7v11c0 4 2 7 5 7h9M251 600v13"/>
            </g>
            <use href="#sink" x="195" y="458"/>
            <use href="#burners" x="223" y="456"/>
            <!-- lower units -->
            <g stroke="#bcc0c3" stroke-width="2">
              <path d="M390 552h10v8h68v-19M400 568h75M400 568v56h70v-56M476 541v83M625 542h45v33h11M676 541v26h5v8M725 575h115v-7h-28v-27M725 575v-8h78v-26M672 624h385M672 631h459v36h8v-43h-73v-54h33v-9h-33v-14h-9v77M672 624v7"/>
              <path d="M931 469h5v20h157v-34h6v42h-33v5h-9v-5H931v36h43v6h-43v42h43v6h-43v37"/>
              <path d="M917 428h-15v6h15v35h-6v29h6v13M1255 469h-16v29h18l9 65M1234 671v-5h32"/>
              <path d="M919 477v15M930 477v15M919 484h11M1247 475v19M1264 475v19M1247 484h17" stroke-width="3"/>
            </g>
            <path d="M899 434h3v29h-3z" fill="#6b7278"/>
            <path d="M589 541h31v13h-31z" fill="#6d046f" stroke="#a43aa6"/>
            <path d="M588 569h32v-28h6v34h-38z" fill="#6d046f" stroke="#b85cba" stroke-width="2"/>
            <path d="M604.500 541v13" stroke="#a43aa6"/>
            <g stroke="#9aa0a5">
              <path d="M401 568l68 13M469 568l-68 13M401 581.500h68M390 549.500h50v-8M413 541c5 4 9 4 13 4M441 545c5-1 8-2 9-4M633.500 542.500h22v10h-22zM626 556.500h18M651 556.500h19M681.500 541v26M684.500 541v26M681 567.500h44M714 541c5 6 8 16 10 26M711 541c6 5 8 9 12 9M738 551c6-1 9-3 12-6M769.500 541v22h32M833.500 541v24M841.500 541v30M812 565.500h21"/>
              <path d="M628 624l4-17 9-13 13-9 17-3M668.500 582v42M670.500 582v42M628 625.500h43M825.500 627v34M811.500 671v-10h29v10"/>
              <path d="M937.500 460.500h35v28h-35zM975.500 460.500h26v28h-26zM1002.500 455.500h28v33h-28zM1030 460h62M1034 475v14M975 475h12M993 475h9"/>
              <path d="M1014 504.500h43M1014 502.500h43M1014 504l3 16 9 13 13 9 18 4M1057.500 502v45"/>
              <path d="M973.500 539v42M933.500 542.500h38v37h-38zM933 542l38 37M971 542l-38 37"/>
              <path d="M932 504h8c3 0 5 3 5 6v11c0 4-2 7-5 7h-8M947 510v12M969 516c0 4-6 9-12 9-6 0-9-4-9-9s3-9 9-9c6 0 12 5 12 9z"/>
              <path d="M1027.500 624v-70h30M1028 555h7M1049 555h8M1029 570v12M1029 604v6h6M1050 610h7"/>
              <circle cx="1042" cy="582" r="11"/><circle cx="1042" cy="582" r="9"/><path d="M1041 582h7M1048 579v6" stroke-width="2"/>
              <path d="M1066 574.500h10v22h-10M1079.500 571v24M1079.500 601v23M1131 667l24 4"/>
              <rect x="935.500" y="592.500" width="30" height="29" rx="2"/>
            </g>
            <use href="#sink" x="1036" y="463"/>
            <use href="#burners" x="1063" y="460"/>
            <!-- labels -->
            <g class="font-['Roboto',sans-serif] font-bold text-[17px]" fill="#bfc4c7" text-anchor="middle">
              <text x="248" y="264">Story Studio Unit</text>
              <text x="1085" y="264">Suite</text>
              <text x="327" y="432">Elevator</text>
              <text x="265" y="665">Corridor</text>
            </g>
            <g class="font-['Noto_Sans',sans-serif] text-[14px]" fill="#b4babe" text-anchor="middle">
              <text x="226" y="290">406</text>
              <text x="1085" y="290">410</text>
              <text x="327" y="458">E2</text>
              <text x="329" y="554">P07</text>
              <text x="336" y="608">W01</text>
              <text x="381" y="533">402</text>
              <text x="1015" y="476">DW</text>
              <text x="176" y="475">DW</text>
              <text x="826" y="679">P01</text>
              <text transform="translate(246 561) rotate(-90)">Washer</text>
              <text transform="translate(263 559) rotate(-90)">Dryer</text>
              <text transform="translate(782 550) rotate(-90)">Washer</text>
              <text transform="translate(799 548) rotate(-90)">Dryer</text>
              <text transform="translate(946 606) rotate(-90)">Washer</text>
              <text transform="translate(963 606) rotate(-90)">Dryer</text>
            </g>
          </svg>

          <!-- Contextual toolbar -->
          <div class="absolute top-0 left-0 w-[211px] font-['Liberation_Sans',sans-serif]">
            <div class="flex h-[58px] bg-[#29323a] px-1 py-[3px] whitespace-nowrap">
              <button class="w-6 flex flex-col items-center bg-[#243c4a] border border-[#2e5166]">
                <svg class="w-5 h-[30px]" viewBox="0 0 20 30"><path d="M4 7H1v19h3M16 7h3v19h-3" fill="none" stroke="#b4babf"/><circle cx="9" cy="12" r="4.500" fill="#cdd1d4"/><path d="M8 14l3-2h6v7l-3 3H8z" fill="#5b9cc4"/><path d="M3 21h7M6.500 17.500v7" stroke="#45b56c" stroke-width="2"/></svg>
                <span>Add</span>
              </button>
              <button class="w-9 flex flex-col items-center py-px">
                <svg class="w-5 h-[30px]" viewBox="0 0 20 30"><path d="M4 7H1v19h3M16 7h3v19h-3" fill="none" stroke="#b4babf"/><circle cx="9" cy="12" r="4.500" fill="#cdd1d4"/><path d="M8 14l3-2h6v7l-3 3H8z" fill="#5b9cc4"/><path d="M3 21h7" stroke="#cf3f4c" stroke-width="2"/></svg>
                <span>Remove</span>
              </button>
              <button class="w-[63px] ml-2.5 flex flex-col items-center bg-[#243c4a] border border-[#2e5166]">
                <svg class="w-9 h-[30px]" viewBox="0 0 36 30"><circle cx="8" cy="7" r="5" fill="#b9bec2"/><path d="M9 9l2-2h7v7l-2 3H9z" fill="#d8c9c4"/><path d="M16 3h10v4M23 5l3 3 3-3" fill="none" stroke="#d0d4d7" stroke-width="1.500"/><circle cx="25" cy="16" r="5" fill="#8db7cf"/><path d="M25 18l3-2h7v8l-2 2h-8z" fill="#a9c9da"/></svg>
                <span>Transfer Element</span>
              </button>
              <button class="w-7 ml-2 flex flex-col items-center py-px">
                <svg class="w-5 h-[30px]" viewBox="0 0 20 30"><path d="M3 17l5 5L17 11" fill="none" stroke="#4bb26d" stroke-width="3"/></svg>
                <span>Finish</span>
              </button>
              <button class="w-7 flex flex-col items-center py-px">
                <svg class="w-5 h-[30px]" viewBox="0 0 20 30"><path d="M3 10l14 14M17 10L3 24" stroke="#b9404b" stroke-width="3"/></svg>
                <span>Cancel</span>
              </button>
            </div>
            <p class="h-[13px] leading-[13px] text-center bg-[#403f3c] text-[#b9bcbc]">Design Options - Kitchen 1</p>
          </div>

          <!-- Accelerated graphics toggle -->
          <label class="absolute top-2 right-[22px] flex items-center gap-0.5 font-['Noto_Sans',sans-serif] leading-[9px]">
            <input type="checkbox" role="switch" class="appearance-none w-[22px] h-[11px] rounded-full bg-[#55585a] before:block before:size-[9px] before:m-px before:rounded-full before:bg-[#d6d0d0]">
            <span>Accelerated Graphics<br><i>Tech Preview</i></span>
          </label>
          <div class="absolute top-0 right-0 w-[19px] h-[74px] bg-[#45494c] flex flex-col items-center pt-3 gap-4">
            <svg class="w-3 h-3" viewBox="0 0 12 12"><circle cx="6" cy="6" r="5" fill="none" stroke="#868b8f"/><circle cx="6" cy="6" r="2.500" fill="none" stroke="#868b8f" stroke-width="1.500"/></svg>
            <svg class="w-3 h-3" viewBox="0 0 12 12"><path d="M2 2h7v6H2z" fill="#5f7d3e"/><circle cx="8" cy="8" r="2" fill="#9aa37c"/></svg>
          </div>
        </div>
        <div class="w-2.5 flex flex-col items-center justify-between py-1 bg-[#29323a] text-[#8b949b]">
          <svg class="w-1.5 h-1.5 rotate-180"><use href="#i-chev"/></svg>
          <span class="w-1.5 h-3 rounded-full bg-[#5a636b]"></span>
          <svg class="w-1.5 h-1.5"><use href="#i-chev"/></svg>
        </div>
      </div>

      <!-- View control bar -->
      <div class="flex items-center h-[13px] pl-2 bg-[#262e35]">
        <button class="w-12 text-left whitespace-nowrap">1/8" = 1'-0"</button>
        <div class="flex items-center gap-[7px]">
          <svg class="w-2.5 h-2" viewBox="0 0 10 8"><path d="M0 0h10v8H0z" fill="#a8aeb3"/></svg>
          <svg class="w-2.5 h-2.5" viewBox="0 0 10 10"><path d="M.5 3.500h6v6h-6zM.5 3.500l3-3h6v6l-3 3M6.500 3.500l3-3" fill="none" stroke="#a8aeb3"/></svg>
          <svg class="w-2.5 h-2.5" viewBox="0 0 10 10"><circle cx="4" cy="4" r="2.300" fill="#d9a62c"/><path d="M4 0v8M0 4h8M1 1l6 6M7 1L1 7" stroke="#d9b15d" stroke-width=".7"/><circle cx="8" cy="7" r="2" fill="#4fb5a9"/></svg>
          <svg class="w-2.5 h-2.5" viewBox="0 0 10 10"><circle cx="4" cy="4" r="3.500" fill="#6b7278"/><path d="M2 6h6v3H2z" fill="#4c545b"/><circle cx="8.500" cy="7" r="1.500" fill="#8b9197"/></svg>
          <svg class="w-2.5 h-2.5" viewBox="0 0 10 10"><path d="M0 8h3V2h7M3 8h5V2" fill="none" stroke="#7b8288"/></svg>
          <svg class="w-2.5 h-2.5" viewBox="0 0 10 10"><path d="M0 8h3V2h7M3 8h5V2" fill="none" stroke="#c3c8cc"/><circle cx="7.500" cy="7" r="2.200" fill="#4fb5a9"/></svg>
          <svg class="w-2.5 h-2.5" viewBox="0 0 10 10"><circle cx="2.500" cy="7" r="1.800" fill="none" stroke="#8b9197"/><circle cx="7.500" cy="7" r="1.800" fill="none" stroke="#8b9197"/><path d="M1 5l2-3M9 5L7 2" stroke="#8b9197"/></svg>
          <svg class="w-2.5 h-3"><use href="#i-bulb"/></svg>
          <svg class="w-2.5 h-2.5" viewBox="0 0 10 10"><path d="M1 1h5v5H1z" fill="#a8aeb3"/><path d="M4 4h5v5H4z" fill="#5a6167" stroke="#c3c8cc" stroke-dasharray="1 1"/></svg>
          <svg class="w-2.5 h-2.5" viewBox="0 0 10 10"><path d="M1 3l3-2h5v8H1zM1 5h8M4 1v8M6.500 1v8" fill="none" stroke="#7b8288"/></svg>
          <svg class="w-3 h-2.5" viewBox="0 0 12 10"><path d="M1 1v8M1 3h9M10 1v4M3 8h3" fill="none" stroke="#b4babf"/><circle cx="9" cy="7" r="2" fill="#4fb5a9"/></svg>
        </div>
        <svg class="w-1.5 h-1.5 ml-2 rotate-90"><use href="#i-chev"/></svg>
        <span class="w-3 h-1.5 ml-[408px] rounded-full bg-[#59626a]"></span>
        <svg class="w-1.5 h-1.5 ml-auto mr-3.5 -rotate-90"><use href="#i-chev"/></svg>
      </div>
    </div>
  </main>

  <!-- Status bar -->
  <footer class="flex items-center h-[17px] shrink-0 pl-px pr-12 bg-[#2b343c] border-t border-[#1d242b]">
    <p class="w-[596px]">Views : Section : Longitudinal Section</p>
    <svg class="w-3 h-3" viewBox="0 0 12 12"><path d="M1 2l4-1v8L2 8z" fill="#6fa8c8"/><path d="M5 4l4-2 1 6-4 4z" fill="#4fae70"/><circle cx="8.500" cy="2.500" r="1.800" fill="#c98a70"/><path d="M9 7l2 2" stroke="#d0d4d7"/></svg>
    <svg class="w-1.5 h-1.5 ml-[134px] text-[#59626a]"><use href="#i-chev"/></svg>
    <svg class="w-3 h-3 ml-2" viewBox="0 0 12 12"><path d="M1 12c0-3 1-4 3-4s3 1 3 4zM7 1h5v4H9L7 7z" fill="#7b8288"/><circle cx="4" cy="6" r="2" fill="#7b8288"/></svg>
    <span class="text-[#7b8288]">:0</span>
    <svg class="w-3 h-2.5 ml-4" viewBox="0 0 12 10"><path d="M0 0h12v10H0z" fill="#c3c8cc"/><path d="M2 2.500h1M5 2.500h6M2 5h1M5 5h6M2 7.500h1M5 7.500h6" stroke="#353d44"/></svg>
    <svg class="w-3 h-3 ml-1.5" viewBox="0 0 12 12"><path d="M1 0h10v8H7l-2 3V8H1z" fill="#7b8288"/><path d="M3 2.500h6M3 5h6" stroke="#2b343c"/></svg>
    <label class="relative flex items-center w-[133px] ml-1.5">
      <select class="appearance-none w-full outline-none" aria-label="Active option"><option>Main Model</option></select>
      <svg class="absolute right-0 w-1.5 h-1.5 text-[#67717a]"><use href="#i-chev"/></svg>
    </label>
    <label class="flex items-center gap-px ml-1.5 whitespace-nowrap">
      <input type="checkbox" checked class="appearance-none size-2 bg-[#b4babf] before:block before:content-['✓'] before:text-[8px] before:leading-2 before:text-center before:text-[#20282f]">
      Exclude Options
    </label>
    <div class="ml-auto flex items-center gap-[5px]">
      <svg class="w-3 h-3" viewBox="0 0 12 12"><path d="M0 2h3M5 2h4" stroke="#c58f6a" stroke-width="1.500"/><use href="#i-cursor"/></svg>
      <svg class="w-3 h-3" viewBox="0 0 12 12"><path d="M1 8l4-6 2 5z" fill="#6fa8c8"/><path d="M8 1l3 3M11 1L8 4" stroke="#cf4f5b"/><use href="#i-cursor"/></svg>
      <svg class="w-3 h-3" viewBox="0 0 12 12"><path d="M1 1h6M4 1v5" stroke="#b4babf" stroke-width="1.500"/><use href="#i-cursor"/></svg>
      <svg class="w-3 h-3" viewBox="0 0 12 12"><path d="M1 2l4-1v10l-4-1z" fill="#6fa8c8"/><path d="M8 1l3 3M11 1L8 4" stroke="#cf4f5b"/><use href="#i-cursor"/></svg>
      <svg class="w-3 h-3" viewBox="0 0 12 12"><path d="M5 0v8M0 4h9" stroke="#b4babf"/><use href="#i-cursor"/></svg>
      <svg class="w-3 h-3" viewBox="0 0 12 12"><circle cx="6" cy="6" r="4.500" fill="none" stroke="#7b8288" stroke-width="1.500" stroke-dasharray="1.500 2"/></svg>
      <span class="flex items-center"><svg class="w-2.5 h-2.5"><use href="#i-funnel"/></svg>:0</span>
    </div>
  </footer>

  <!-- Transfer Elements dialog -->
  <dialog open class="fixed inset-0 m-auto w-[500px] h-[364px] rounded-sm bg-[#efefef] text-[#1c1c1c] font-['Liberation_Sans',sans-serif] shadow-lg">
    <form class="h-full flex flex-col">
      <div class="flex items-center justify-between h-5 px-2 bg-[#f4f5f5] border-b border-[#9aa0a4] text-[#929292] rounded-t-sm">
        <h1>Transfer Elements</h1>
        <button type="button" aria-label="Close"><svg class="w-[7px] h-[7px]"><use href="#i-x"/></svg></button>
      </div>
      <p class="px-2 mt-[5px]">Move or duplicate selected elements between groups or the main model</p>
      <div class="flex gap-[15px] px-[7px] mt-[13px]">
        <fieldset class="w-[216px] border border-[#e2e2e2] px-[7px] pb-[10px]">
          <legend class="-ml-0.5 px-0.5">Destination</legend>
          <div class="flex flex-col gap-1 mt-2">
            <label class="flex items-center gap-px"><input type="radio" name="dest" class="appearance-none size-[9px] rounded-full border border-[#7a7a7a] bg-white checked:border-[3px] checked:border-[#0e5fa8]">Main model</label>
            <label class="flex items-center gap-px"><input type="radio" name="dest" checked class="appearance-none size-[9px] rounded-full border border-[#7a7a7a] bg-white checked:border-[3px] checked:border-[#0e5fa8]">Groups</label>
          </div>
          <div class="w-[192px] h-[198px] mt-2.5 border border-[#4a4a4a] bg-white flex flex-col text-[7px]">
            <table class="w-full border-collapse">
              <thead>
                <tr class="h-3 bg-[#f1f1f1] border-b border-[#4a4a4a]"><th class="w-[27px] p-0 font-normal border-r border-[#4a4a4a]">Add</th><th class="p-0 pl-1.5 font-normal text-left">Group</th></tr>
              </thead>
              <tbody id="transfer-groups"></tbody>
            </table>
            <div class="flex-1 w-[27px] border-r border-dashed border-[#8a8a8a]"></div>
          </div>
          <button type="button" class="block w-28 h-[15px] mt-1.5 ml-20 rounded-xs bg-white border border-[#d6d6d6] text-[7px]">Design Options Manager</button>
        </fieldset>
        <div class="flex-1 flex flex-col gap-3.5">
          <fieldset class="h-12 border border-[#e2e2e2] px-1.5">
            <legend class="-ml-0.5 px-0.5">Move or Duplicate</legend>
            <div class="flex mt-[11px]">
              <label class="flex items-center gap-px w-[106px]"><input type="radio" name="mode" class="appearance-none size-[9px] rounded-full border border-[#7a7a7a] bg-white">Move (Cut &amp; Paste)</label>
              <label class="flex items-center gap-px"><input type="radio" name="mode" class="appearance-none size-[9px] rounded-full border border-[#7a7a7a] bg-white">Duplicate (Copy &amp; Paste)</label>
            </div>
          </fieldset>
          <fieldset class="h-[62px] border border-[#e2e2e2] px-1.5">
            <legend class="-ml-0.5 px-0.5">Transfer Options</legend>
            <div class="flex flex-col gap-[7px] mt-[11px]">
              <label class="flex items-center gap-px"><input type="checkbox" class="appearance-none size-[9px] border border-[#7a7a7a] bg-white">Include annotations</label>
              <label class="flex items-center gap-px"><input type="checkbox" class="appearance-none size-[9px] border border-[#7a7a7a] bg-white">Preserve graphics/visibility overrides</label>
            </div>
          </fieldset>
        </div>
      </div>
      <div class="flex justify-end gap-[5px] mt-auto mb-3.5 px-[7px] text-[7px]">
        <button type="button" class="w-[45px] h-[15px] rounded-xs bg-white border border-[#d6d6d6]">Ok</button>
        <button type="button" class="w-[58px] h-[15px] rounded-xs bg-white border border-[#d6d6d6]">Cancel</button>
      </div>
    </form>
    <!-- Hand pointer -->
    <svg class="absolute left-[248px] top-[75px] w-3 h-4" viewBox="0 0 12 16"><path d="M3.500 9V2c0-1.500 2-1.500 2 0v4c0-1 1.800-1 1.800.3 0-1 1.800-1 1.800.4 0-.9 1.700-.8 1.700.5V11c0 2-1 4-3 4H6c-1.500 0-2-1-2.800-2.300L1 9.500C.5 8.500 1.800 7.800 2.600 8.600z" fill="#fff" stroke="#333" stroke-width=".9"/></svg>
  </dialog>

  <script>
    const groups = [
      { name: 'Kitchen', rows: [['Kitchen 1', '#a500a8', true], ['Kitchen 2', '#a60000', false], ['Kitchen 3', '#1fc9a6', false]] },
      { name: 'Main Living', rows: [['Living 1', '#5b1ea6', false], ['Living 2', '#0014a8', false], ['Living 3', '#ad6a12', false]] },
      { name: 'W/C 1', rows: [['Option A', '#1fc9a6', true], ['Option B', '#5b1ea6', false], ['Option C', '#b8c712', false]] },
    ];
    const presets = [['Best Config', true], ['Preset 2', false]];
    const transfer = [['Kitchen', true], ['Main Living', false], ['W/C 1', false], ['Living Floor', true], ['W/C Floor', true]];

    const box = (on) => `<input type="checkbox" ${on ? 'checked' : ''} class="appearance-none size-[9px] border border-[#67717a] checked:bg-[#737c83] checked:before:block checked:before:content-['✓'] checked:before:text-[7px] checked:before:leading-[7px] checked:before:text-center checked:before:text-[#1d242b]">`;

    document.getElementById('groups').innerHTML = groups.map((g) => `
      <section>
        <h3 class="flex items-center justify-between h-3.5 px-px pr-1 bg-[#1b2229] border-y border-[#29323a]">${g.name}<svg class="w-[7px] h-[7px]"><use href="#i-dbl"/></svg></h3>
        ${g.rows.map(([name, color, on]) => `
          <div class="flex items-center h-[13px] pl-[3px] pr-px border-b border-[#323b44]">
            <label class="flex-1 flex items-center gap-[10px]">${box(on)}${name}</label>
            <span class="size-2 mr-[3px]" style="background-color: ${color}"></span>
            <button class="w-[47px] h-[11px] leading-[9px] border border-[#4c565f]">Edit...</button>
          </div>`).join('')}
      </section>`).join('');

    document.getElementById('presets').innerHTML = `
      <h3 class="flex items-center justify-between h-3 px-px pr-1.5 mb-px bg-[#1b2229]">Presets<svg class="w-[7px] h-[7px]"><use href="#i-dbl"/></svg></h3>
      ${presets.map(([name, on]) => `<label class="flex items-center h-[13px] pl-[3px] gap-[10px] border-b border-[#2e373f]">${box(on)}${name}</label>`).join('')}`;

    document.getElementById('transfer-groups').innerHTML = transfer.map(([name, on], i) => `
      <tr class="h-3.5 border-b border-dashed border-[#8a8a8a]">
        <td class="p-0 border-r border-dashed border-[#8a8a8a]"><input id="tg${i}" type="checkbox" ${on ? 'checked' : ''} class="block mx-auto size-[9px] accent-[#0e5fa8]"></td>
        <td class="p-0 pl-1.5 pt-px"><label for="tg${i}">${name}</label></td>
      </tr>`).join('');
  </script>
</body>
</html>
